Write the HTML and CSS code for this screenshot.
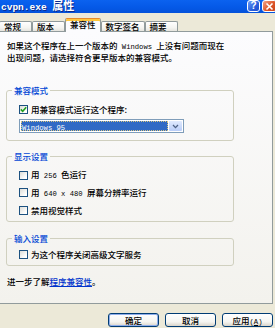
FILE: index.html
```html
<!DOCTYPE html>
<html lang="zh-CN">
<head>
<meta charset="utf-8">
<title>cvpn.exe 属性</title>
<link rel="stylesheet" href="styles.css">
</head>
<body>
<div class="titlebar">
  <span class="title"><span class="title-lat">cvpn.exe </span>属性</span>
  <div class="caption">
    <span class="cbtn help">?</span>
    <span class="cbtn close"><svg width="9" height="9" viewBox="0 0 9 9"><path d="M1.5 1.5 L7.5 7.5 M7.5 1.5 L1.5 7.5" stroke="#fff" stroke-width="1.6" fill="none"/></svg></span>
  </div>
</div>
<div class="tabs">
  <div class="tab">常规</div>
  <div class="tab">版本</div>
  <div class="tab active">兼容性</div>
  <div class="tab">数字签名</div>
  <div class="tab">摘要</div>
</div>
<div class="panel">
  <p class="desc">如果这个程序在上一个版本的<span class="lat"> Windows </span>上没有问题而现在<br>出现问题，请选择符合更早版本的兼容模式。</p>

  <fieldset class="group g1">
    <legend>兼容模式</legend>
    <div class="check-row first">
      <span class="cb"><svg width="7" height="7" viewBox="0 0 7 7"><polyline points="0.8,3.4 2.7,5.3 6.2,1.3" stroke="#21A121" stroke-width="1.6" fill="none"/></svg></span>
      <span>用兼容模式运行这个程序:</span>
    </div>
    <div class="select">
      <span class="sel-value"><span class="lat">Windows 95</span></span>
      <span class="sel-btn"><svg width="7" height="5" viewBox="0 0 7 5"><polyline points="1,1 3.5,3.6 6,1" stroke="#4D6185" stroke-width="1.3" fill="none"/></svg></span>
    </div>
  </fieldset>

  <fieldset class="group g2">
    <legend>显示设置</legend>
    <div class="check-row first"><span class="cb"></span><span>用<span class="lat"> 256 </span>色运行</span></div>
    <div class="check-row"><span class="cb"></span><span>用<span class="lat"> 640 x 480 </span>屏幕分辨率运行</span></div>
    <div class="check-row"><span class="cb"></span><span>禁用视觉样式</span></div>
  </fieldset>

  <fieldset class="group g3">
    <legend>输入设置</legend>
    <div class="check-row first"><span class="cb"></span><span>为这个程序关闭高级文字服务</span></div>
  </fieldset>

  <p class="more">进一步了解<a class="link" href="#">程序兼容性</a>。</p>
</div>
<div class="buttons">
  <span class="btn default">确定</span>
  <span class="btn">取消</span>
  <span class="btn">应用<span class="lat">(<u>A</u>)</span></span>
</div>
</body>
</html>
```

FILE: styles.css
```css
html, body {
  margin: 0;
  padding: 0;
}
body {
  width: 275px;
  height: 328px;
  overflow: hidden;
  background: #ECE9D8;
  font-family: "Noto Sans CJK SC", "Noto Sans CJK JP", sans-serif;
  font-size: 8.5px;
  font-weight: 500;
  color: #000;
}
.lat {
  font-family: "Liberation Mono", "DejaVu Sans Mono", monospace;
  font-size: 7.2px;
  font-weight: normal;
}

/* title bar */
.titlebar {
  height: 13px;
  display: flex;
  align-items: center;
  background: linear-gradient(#0B62EF, #0559E7 55%, #0452DA);
  padding-left: 1px;
}
.title {
  flex: 1;
  color: #fff;
  font-weight: bold;
  font-size: 11px;
  line-height: 12px;
  white-space: nowrap;
  text-shadow: 1px 1px 0 #0A2A8C;
}
.title-lat {
  font-family: "Liberation Mono", monospace;
  font-size: 9.5px;
  font-weight: bold;
  white-space: pre;
}
.caption {
  display: flex;
  gap: 2px;
  margin-right: -2px;
  align-self: flex-start;
}
.cbtn {
  box-sizing: border-box;
  width: 13px;
  height: 12px;
  border: 1px solid #fff;
  border-radius: 3px;
  display: flex;
  align-items: center;
  justify-content: center;
  color: #fff;
}
.help {
  background: linear-gradient(135deg, #6B9CF7, #2A5EDB 60%, #1E4FD0);
  font: bold 10px "Liberation Sans", sans-serif;
  line-height: 10px;
}
.close {
  width: 15px;
  background: linear-gradient(135deg, #F3A58A, #DC5529 55%, #C9431A);
}

/* tabs */
.tabs {
  display: flex;
  align-items: flex-end;
  height: 18px;
  margin-left: -1px;
}
.tab {
  box-sizing: border-box;
  height: 10px;
  min-width: 33px;
  padding: 0 4px;
  border: 1px solid #919B9C;
  border-bottom: none;
  border-radius: 2px 2px 0 0;
  background: linear-gradient(#FFFFFF, #F4F4F0 65%, #E5E4DE);
  line-height: 9px;
  white-space: nowrap;
}
.tab.active {
  position: relative;
  z-index: 1;
  height: 14px;
  margin-bottom: -1px;
  background: #FCFCFE;
  border-top: 1px solid #E68B2C;
  box-shadow: inset 0 2px 0 #FFC83C;
  line-height: 11px;
}

/* panel */
.panel {
  box-sizing: border-box;
  width: 274px;
  height: 273px;
  margin-left: -1px;
  border: 1px solid #919B9C;
  background: linear-gradient(#FCFCFE, #F3F2ED);
  padding: 8px 0 0 6px;
}
.desc {
  margin: 0 0 0 1px;
  line-height: 10px;
  white-space: nowrap;
}
.desc .lat, .check-row .lat {
  white-space: pre;
}
.group {
  margin: 0;
  width: 228px;
  box-sizing: border-box;
  border: 1px solid #D0D0BF;
  border-radius: 3px;
  padding: 0 0 7px 12px;
  min-inline-size: auto;
}
.group legend {
  padding: 0 2px;
  margin-left: -7px;
  color: #0046D5;
  line-height: 10px;
}
.g1 { margin-top: 23px; }
.g2 { margin-top: 10px; padding-bottom: 6px; }
.g3 { margin-top: 11px; padding-bottom: 6px; }
.check-row {
  display: flex;
  align-items: center;
  gap: 3px;
  height: 10px;
  line-height: 10px;
  margin-top: 7.5px;
  white-space: nowrap;
}
.check-row.first { margin-top: 9px; }
.g3 .check-row.first { margin-top: 6px; }
.cb {
  flex: none;
  box-sizing: border-box;
  width: 9px;
  height: 9px;
  border: 1px solid #1C5180;
  background: linear-gradient(135deg, #DCDCD7, #FFFFFF 80%);
  display: flex;
  align-items: center;
  justify-content: center;
}
.select {
  margin-top: 5px;
  width: 165px;
  height: 14px;
  box-sizing: border-box;
  border: 1px solid #7F9DB9;
  background: #fff;
  display: flex;
  padding: 1px;
  gap: 1px;
}
.sel-value {
  flex: 1;
  background: #316AC5;
  outline: 1px dotted #D9C680;
  outline-offset: -1px;
  color: #fff;
  line-height: 10px;
  padding-left: 1px;
  white-space: pre;
}
.sel-btn {
  width: 13px;
  border-radius: 1px;
  background: linear-gradient(#E0EAFE, #B9CDF8);
  display: flex;
  align-items: center;
  justify-content: center;
}
.more {
  margin: 10px 0 0 1px;
  line-height: 10px;
}
.link {
  color: #0033CC;
  text-decoration: underline;
}

/* buttons */
.buttons {
  display: flex;
  justify-content: flex-end;
  gap: 6px;
  margin-top: 9px;
  padding-right: 2px;
}
.btn {
  box-sizing: border-box;
  width: 51px;
  height: 14px;
  border: 1px solid #003C74;
  border-radius: 3px;
  background: linear-gradient(#FFFFFF, #F5F5F1 65%, #D9D4C9);
  text-align: center;
  line-height: 12px;
  white-space: nowrap;
}
.btn.default {
  box-shadow: inset 0 0 0 1px #8FAEEB;
}
```
